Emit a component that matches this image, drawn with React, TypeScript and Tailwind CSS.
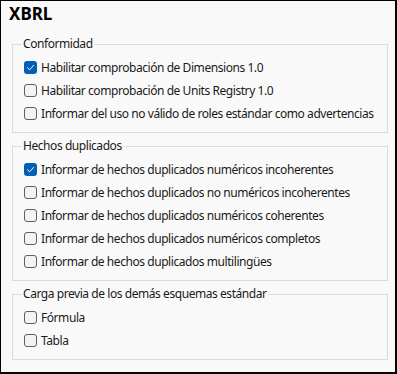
import React from "react";

type Item = { label: string; checked?: boolean };

const sections: { title: string; items: Item[] }[] = [
  {
    title: "Conformidad",
    items: [
      { label: "Habilitar comprobación de Dimensions 1.0", checked: true },
      { label: "Habilitar comprobación de Units Registry 1.0" },
      { label: "Informar del uso no válido de roles estándar como advertencias" },
    ],
  },
  {
    title: "Hechos duplicados",
    items: [
      { label: "Informar de hechos duplicados numéricos incoherentes", checked: true },
      { label: "Informar de hechos duplicados no numéricos incoherentes" },
      { label: "Informar de hechos duplicados numéricos coherentes" },
      { label: "Informar de hechos duplicados numéricos completos" },
      { label: "Informar de hechos duplicados multilingües" },
    ],
  },
  {
    title: "Carga previa de los demás esquemas estándar",
    items: [{ label: "Fórmula" }, { label: "Tabla" }],
  },
];

function Checkbox({ checked }: { checked?: boolean }) {
  if (checked) {
    return (
      <span className="flex h-[13px] w-[13px] shrink-0 items-center justify-center rounded-[3px] bg-[#005fb8]">
        <svg width="9" height="9" viewBox="0 0 9 9" fill="none">
          <path d="M1.5 4.8 L3.6 6.8 L7.6 2.4" stroke="white" strokeWidth="1" strokeLinecap="round" strokeLinejoin="round" />
        </svg>
      </span>
    );
  }
  return <span className="h-[13px] w-[13px] shrink-0 rounded-[3px] border border-[#5e5e5e] bg-[#f3f3f3]" />;
}

export default function App() {
  return (
    <div
      className="h-[374px] w-[397px] border-t border-l border-r-2 border-b-2 border-black bg-[#f9f9f9] text-[12px] tracking-[-0.44px] text-[#1a1a1a]"
      style={{ fontFamily: '"Noto Sans", sans-serif' }}
    >
      <div className="pl-[8px] pt-[1px] text-[17px] font-bold leading-[24px] tracking-normal text-black">XBRL</div>

      <div className="mt-[10px] flex flex-col gap-[5px]">
        {sections.map((s) => (
          <fieldset key={s.title} className="ml-[11px] w-[376px] border border-[#dcdcdc] px-[11px] pb-[7px]">
            <legend className="ml-[-2px] px-[1px] leading-[16px]">{s.title}</legend>
            <div className="flex flex-col pt-[4px]">
              {s.items.map((it) => (
                <div key={it.label} className="flex h-[23px] items-center gap-[4px] whitespace-nowrap">
                  <Checkbox checked={it.checked} />
                  <span>{it.label}</span>
                </div>
              ))}
            </div>
          </fieldset>
        ))}
      </div>
    </div>
  );
}
